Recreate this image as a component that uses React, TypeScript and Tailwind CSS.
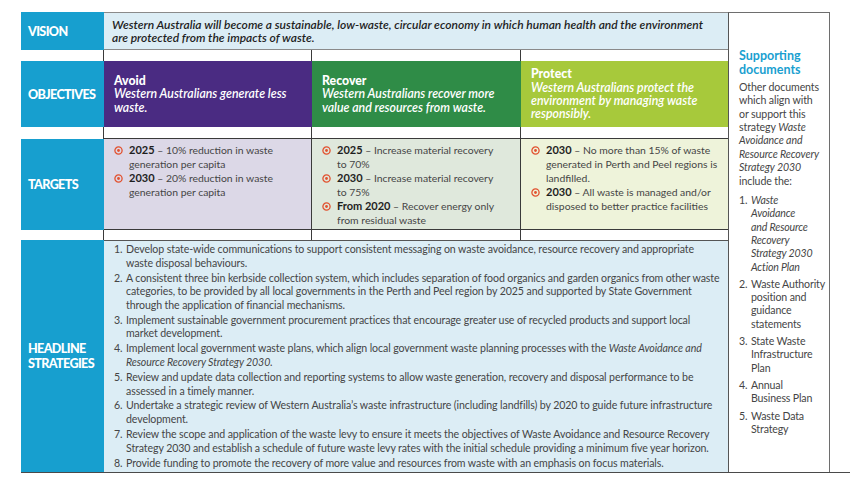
import React from "react";

const Target = () => (
  <svg width="9" height="9" viewBox="0 0 9 9" className="shrink-0 mt-[3px]">
    <circle cx="4.5" cy="4.5" r="3.6" fill="none" stroke="#e2512f" strokeWidth="1.3" />
    <circle cx="4.5" cy="4.5" r="1.4" fill="#e2512f" />
  </svg>
);

const TItem = ({ year, lines }: { year: string; lines: string[] }) => (
  <div className="flex gap-[6px]">
    <Target />
    <div className="whitespace-nowrap text-[#454545]">
      <span className="font-bold text-[#1e1e1e] text-[11px]">{year}</span>
      <span> – {lines[0]}</span>
      {lines.slice(1).map((l, i) => (
        <div key={i}>{l}</div>
      ))}
    </div>
  </div>
);

const strategies: React.ReactNode[][] = [
  [
    "Develop state-wide communications to support consistent messaging on waste avoidance, resource recovery and appropriate",
    "waste disposal behaviours.",
  ],
  [
    "A consistent three bin kerbside collection system, which includes separation of food organics and garden organics from other waste",
    "categories, to be provided by all local governments in the Perth and Peel region by 2025 and supported by State Government",
    "through the application of financial mechanisms.",
  ],
  [
    "Implement sustainable government procurement practices that encourage greater use of recycled products and support local",
    "market development.",
  ],
  [
    <>
      Implement local government waste plans, which align local government waste planning processes with the{" "}
      <i>Waste Avoidance and</i>
    </>,
    <i>Resource Recovery Strategy 2030.</i>,
  ],
  [
    "Review and update data collection and reporting systems to allow waste generation, recovery and disposal performance to be",
    "assessed in a timely manner.",
  ],
  [
    "Undertake a strategic review of Western Australia’s waste infrastructure (including landfills) by 2020 to guide future infrastructure",
    "development.",
  ],
  [
    "Review the scope and application of the waste levy to ensure it meets the objectives of Waste Avoidance and Resource Recovery",
    "Strategy 2030 and establish a schedule of future waste levy rates with the initial schedule providing a minimum five year horizon.",
  ],
  ["Provide funding to promote the recovery of more value and resources from waste with an emphasis on  focus materials."],
];

const docs: React.ReactNode[][] = [
  [
    <i>Waste</i>,
    <i>Avoidance</i>,
    <i>and Resource</i>,
    <i>Recovery</i>,
    <i>Strategy 2030</i>,
    <i>Action Plan</i>,
  ],
  ["Waste Authority", "position and", "guidance", "statements"],
  ["State Waste", "Infrastructure", "Plan"],
  ["Annual", "Business Plan"],
  ["Waste Data", "Strategy"],
];

const Label = ({ children }: { children: React.ReactNode }) => (
  <div className="bg-[#179fcf] text-white font-black text-[12.6px] leading-[15px] flex items-center pl-[7px] tracking-[-0.65px]">
    <div>{children}</div>
  </div>
);

const GapLabel = () => <div className="bg-white border-r border-[#3a3a3a]" />;

const Obj = ({ bg, title, lines }: { bg: string; title: string; lines: string[] }) => (
  <div className={`${bg} text-white pl-[10px] pr-[2px] flex flex-col justify-center text-[12.3px] leading-[13.4px] whitespace-nowrap`}>
    <div className="font-black">{title}</div>
    {lines.map((l, i) => (
      <div key={i} className="italic font-semibold">
        {l}
      </div>
    ))}
  </div>
);

export default function App() {
  return (
    <div
      className="w-[850px] h-[494px] bg-white pt-[12px] pl-[21px]"
      style={{ fontFamily: "Lato, 'Liberation Sans', sans-serif" }}
    >
      <div className="grid grid-cols-[83px_208px_209px_207px_102px] grid-rows-[38px_11px_66px_12px_91px_10px_232px] border-b border-[#4a4a4a]">
        {/* Vision */}
        <Label>VISION</Label>
        <div className="col-span-3 bg-[#dcedf5] border-t border-b border-[#8a8a8a] pl-[8px] pr-[2px] flex flex-col justify-center text-[12px] leading-[13.5px] italic font-semibold text-[#1f1f1f] whitespace-nowrap">
          <div>Western Australia will become a sustainable, low-waste, circular economy in which human health and the environment</div>
          <div>are protected from the impacts of waste.</div>
        </div>
        {/* Sidebar */}
        <div className="row-span-7 border-t border-r border-l border-[#6e6e6e] border-l-[#555] flex flex-col justify-center pl-[10px] text-[#454545] whitespace-nowrap overflow-hidden">
          <div className="text-[#1a9fd0] font-bold text-[12.5px] leading-[14px]">
            <div>Supporting</div>
            <div>documents</div>
          </div>
          <div className="mt-[4px] text-[10.6px] leading-[13.4px] tracking-[-0.1px]">
            <div>Other documents</div>
            <div>which align with</div>
            <div>or support this</div>
            <div>
              strategy <i>Waste</i>
            </div>
            <div>
              <i>Avoidance and</i>
            </div>
            <div>
              <i>Resource Recovery</i>
            </div>
            <div>
              <i>Strategy 2030</i>
            </div>
            <div>include the:</div>
          </div>
          <ol className="mt-[6px] text-[10.6px] leading-[13.3px] tracking-[-0.15px] flex flex-col gap-[4px]">
            {docs.map((d, i) => (
              <li key={i} className="flex">
                <span className="w-[12px] shrink-0">{i + 1}.</span>
                <span>
                  {d.map((l, j) => (
                    <div key={j}>{l}</div>
                  ))}
                </span>
              </li>
            ))}
          </ol>
        </div>

        {/* gap */}
        <GapLabel />
        <div className="bg-white border-r border-[#3a3a3a]" />
        <div className="bg-white border-r border-[#3a3a3a]" />
        <div className="bg-white" />

        {/* Objectives */}
        <Label>OBJECTIVES</Label>
        <Obj bg="bg-[#4a2b82]" title="Avoid" lines={["Western Australians generate less", "waste."]} />
        <Obj bg="bg-[#2f8c47]" title="Recover" lines={["Western Australians recover more", "value and resources from waste."]} />
        <Obj
          bg="bg-[#a7c93b]"
          title="Protect"
          lines={["Western Australians protect the", "environment by managing waste", "responsibly."]}
        />

        {/* gap */}
        <GapLabel />
        <div className="bg-white border-r border-b border-[#3a3a3a]" />
        <div className="bg-white border-r border-b border-[#3a3a3a]" />
        <div className="bg-white border-b border-[#3a3a3a]" />

        {/* Targets */}
        <Label>TARGETS</Label>
        <div className="bg-[#dcd8e7] border-r border-b border-[#3a3a3a] pl-[10px] pt-[4px] text-[10.4px] leading-[14px]">
          <TItem year="2025" lines={["10% reduction in waste", "generation per capita"]} />
          <TItem year="2030" lines={["20% reduction in waste", "generation per capita"]} />
        </div>
        <div className="bg-[#dfe8dc] border-r border-b border-[#3a3a3a] pl-[10px] pt-[4px] text-[10.4px] leading-[14px]">
          <TItem year="2025" lines={["Increase material recovery", "to 70%"]} />
          <TItem year="2030" lines={["Increase material recovery", "to 75%"]} />
          <TItem year="From 2020" lines={["Recover energy only", "from residual waste"]} />
        </div>
        <div className="bg-[#eef3da] border-b border-[#3a3a3a] pl-[10px] pt-[4px] text-[10.4px] leading-[14px]">
          <TItem year="2030" lines={["No more than 15% of waste", "generated in Perth and Peel regions is", "landfilled."]} />
          <TItem year="2030" lines={["All waste is managed and/or", "disposed to better practice facilities"]} />
        </div>

        {/* gap */}
        <GapLabel />
        <div className="bg-white border-r border-[#3a3a3a]" />
        <div className="bg-white border-r border-[#3a3a3a]" />
        <div className="bg-white" />

        {/* Strategies */}
        <Label>
          HEADLINE
          <br />
          STRATEGIES
        </Label>
        <div className="col-span-3 bg-[#dcedf5] border-t border-[#555] pl-[10px] pt-[2px] text-[10.6px] leading-[13.6px] tracking-[-0.1px] text-[#454545] whitespace-nowrap overflow-hidden">
          <ol className="flex flex-col gap-[1.4px]">
            {strategies.map((s, i) => (
              <li key={i} className="flex">
                <span className="w-[12px] shrink-0">{i + 1}.</span>
                <span>
                  {s.map((l, j) => (
                    <div key={j}>{l}</div>
                  ))}
                </span>
              </li>
            ))}
          </ol>
        </div>
      </div>
    </div>
  );
}
